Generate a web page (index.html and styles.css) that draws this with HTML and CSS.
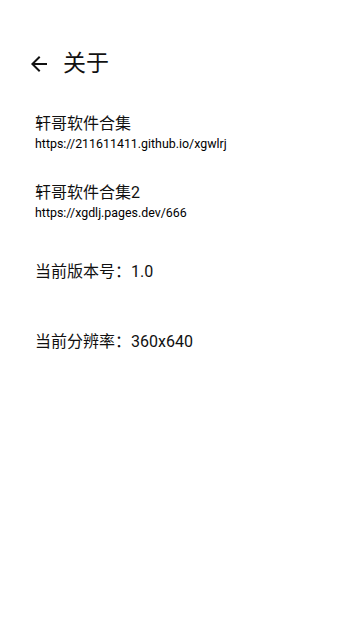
FILE: index.html
```html
<!DOCTYPE html>
<html lang="zh">
<head>
  <meta charset="UTF-8">
  <meta name="viewport" content="width=device-width, initial-scale=1.0">
  <title>关于</title>
  <link rel="stylesheet" href="styles.css">
</head>
<body>

  <div class="header">
    <svg class="back" width="24" height="24" viewBox="0 0 24 24">
      <path d="M20 11H7.83l5.59-5.59L12 4l-8 8 8 8 1.41-1.41L7.83 13H20v-2z" fill="#111"/>
    </svg>
    <h1>关于</h1>
  </div>

  <div class="about-list">
    <!-- links -->
    <div class="item link-item">
      <div class="item-title">轩哥软件合集</div>
      <div class="item-url">https://211611411.github.io/xgwlrj</div>
    </div>

    <div class="item link-item second">
      <div class="item-title">轩哥软件合集2</div>
      <div class="item-url">https://xgdlj.pages.dev/666</div>
    </div>

    <!-- info -->
    <div class="item info version">当前版本号：1.0</div>
    <div class="item info resolution">当前分辨率：360x640</div>
  </div>

</body>
</html>
```

FILE: styles.css
```css
body {
  margin: 0;
  background-color: #fff;
  color: #111;
  font-family: Roboto, "Noto Sans CJK SC", sans-serif;
}

.header {
  display: flex;
  align-items: center;
  height: 48px;
  margin-top: 40px;
  padding-left: 27px;
}

.header .back {
  flex-shrink: 0;
}

.header h1 {
  margin: 0 0 0 12px;
  font-size: 23px;
  font-weight: 400;
  line-height: 28px;
}

.about-list {
  padding-left: 35px;
}

.item-title,
.info {
  font-size: 16px;
  line-height: 20px;
}

.item-url {
  margin-top: 2px;
  font-size: 12.4px;
  line-height: 16px;
  color: #000;
}

.link-item {
  margin-top: 26px;
}

.link-item.second {
  margin-top: 31px;
}

.version {
  margin-top: 41px;
}

.resolution {
  margin-top: 50px;
}
```
